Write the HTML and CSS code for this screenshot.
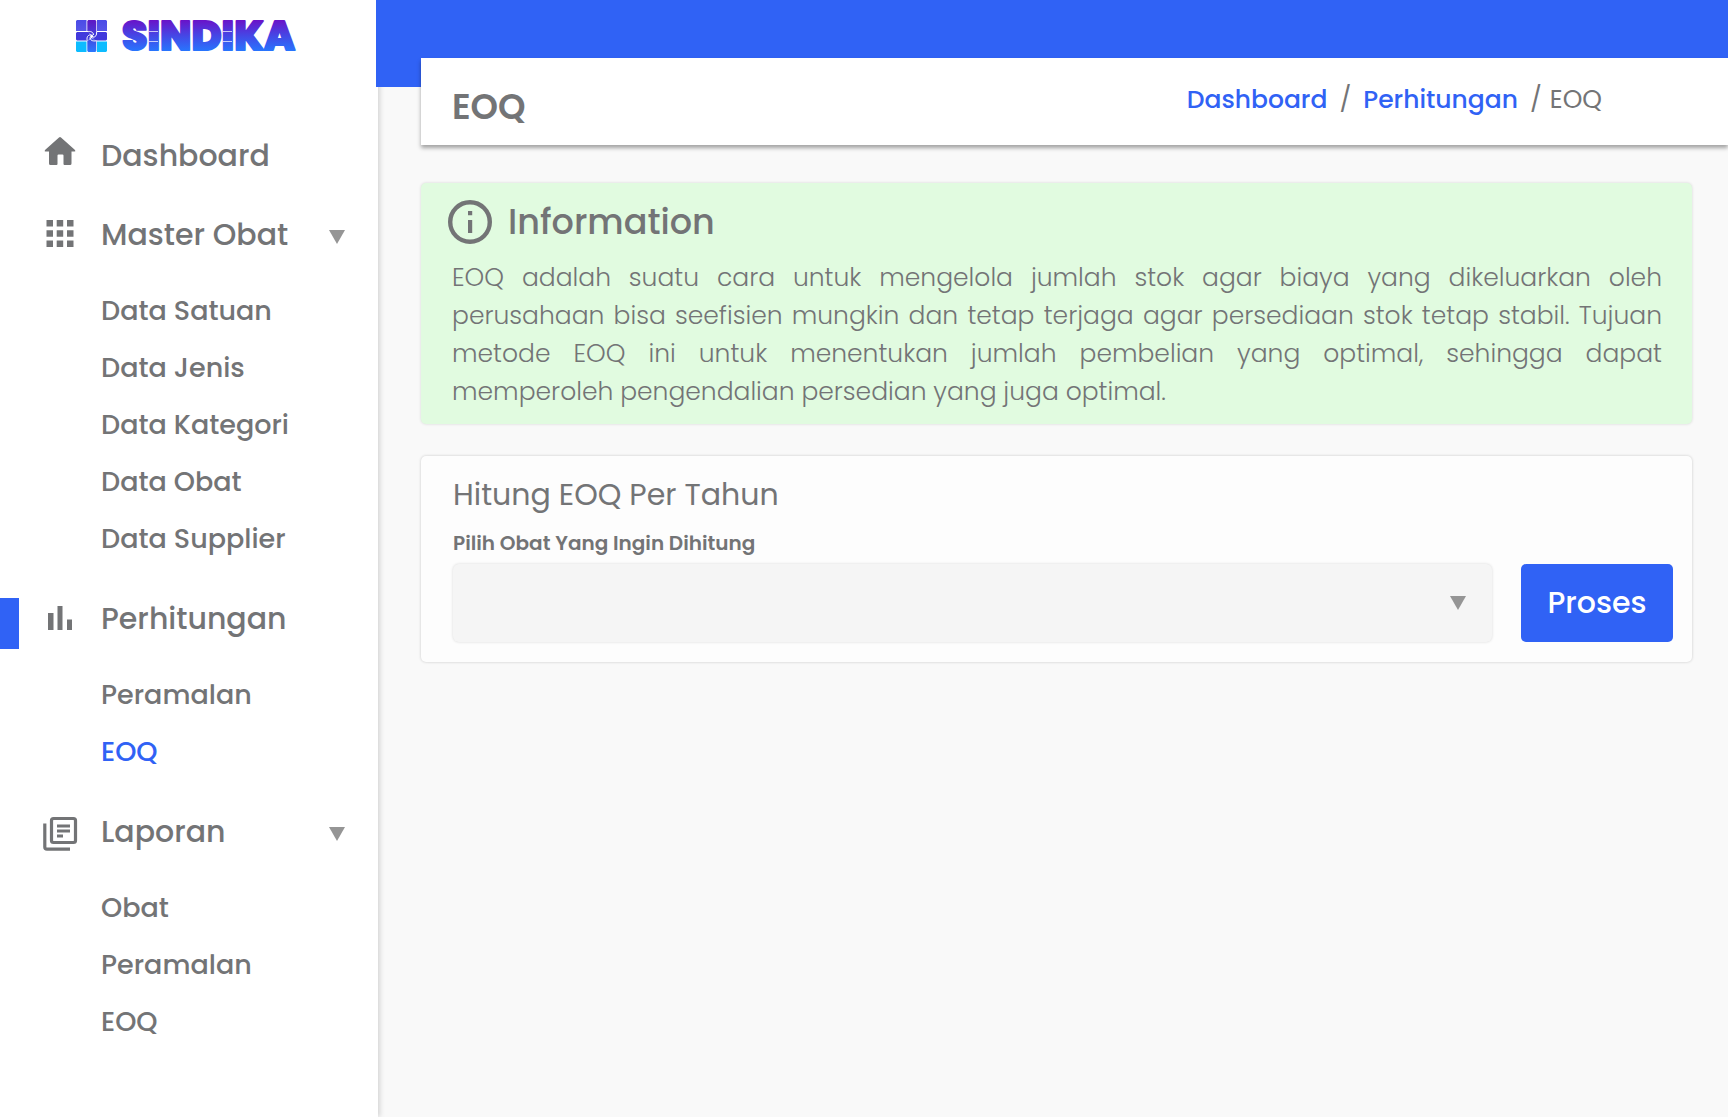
FILE: index.html
```html
<!DOCTYPE html>
<html lang="id">
<head>
<meta charset="utf-8">
<meta name="viewport" content="width=device-width, initial-scale=1">
<title>EOQ - Sindika</title>
<link rel="stylesheet" href="styles.css">
</head>
<body>
<div class="layout">
  <aside class="sidebar">
    <a class="brand" href="#" aria-label="Sindika">
      <svg class="brand-mark" viewBox="0 0 31 32" width="31" height="32" aria-hidden="true">
        <defs>
          <linearGradient id="tile" x1="0" y1="0" x2="0" y2="1"><stop offset="0" stop-color="#4a4be6"/><stop offset="1" stop-color="#5656e8"/></linearGradient>
          <linearGradient id="stem" x1="0" y1="0" x2="0" y2="32" gradientUnits="userSpaceOnUse"><stop offset="0" stop-color="#5f16c4"/><stop offset="0.5" stop-color="#4640dc"/><stop offset="1" stop-color="#2a78ff"/></linearGradient>
        </defs>
        <path fill="url(#tile)" d="M1 0h9.500v11H0V1zM21 0h9l1 1v10H21z"/>
        <path fill="#0dbcff" d="M0 21.500h10.500V32H1l-1-1zM21 21.500h10V31l-1 1h-9z"/>
        <path fill="url(#stem)" d="M11.300 1l1-1h7l1 1v11l-4.500 3-4.500-3zM11.300 21l4.500-3 4.500 3v10l-1 1h-7l-1-1z"/>
        <path fill="#4139dc" d="M0 13l1-1h11l4 4-4 4.500H1l-1-1zM19 12h11l1 1v6.500l-1 1H19l-4-4.500z"/>
        <path fill="none" stroke="#fff" stroke-width="1" d="M11 11.600c3.500-.6 6.500.4 6.500 3.400M20.600 12c.4 3-1 5.200-3.600 5.200M20.500 20.800c-4 .6-6.500-.4-6.500-3.600M11.200 20.500c-.8-3.500.8-5.700 3.600-5.700"/>
        <circle cx="15.700" cy="16.200" r="1.400" fill="#fff"/>
      </svg>
      <svg class="brand-name" viewBox="0 0 184 40" width="184" height="40" aria-hidden="true">
        <defs>
          <linearGradient id="word" x1="0" y1="4" x2="0" y2="36" gradientUnits="userSpaceOnUse"><stop offset="0" stop-color="#6a12c8"/><stop offset="0.5" stop-color="#4448e6"/><stop offset="1" stop-color="#2678ff"/></linearGradient>
        </defs>
        <text class="brand-text" x="3" y="34" fill="url(#word)" stroke="url(#word)">SINDIKA</text>
        <path fill="none" stroke="#fff" stroke-opacity="0.7" d="M30 15.500h9M30 25.500h9M104 15.500h9M104 25.500h9"/>
      </svg>
    </a>
    <nav class="menu" aria-label="Menu utama">
      <a class="menu-title" href="#">
        <svg class="menu-icon" viewBox="0 2 40 40" width="40" height="40" aria-hidden="true"><path fill="currentColor" d="M19 4.500q1-1 2 0l14 12.500q1 1.500-.5 1.500H31.500V30.500q0 1.500-1.500 1.500h-5.500q-1 0-1-1V22.500q0-1-1-1h-4q-1 0-1 1V31q0 1-1 1H10.500Q9 32 9 30.500V18.500H5.500Q4 18.500 5 17z"/></svg>
        <span class="menu-label">Dashboard</span>
      </a>
      <section class="menu-group">
        <button class="menu-title" type="button">
          <svg class="menu-icon" viewBox="0 0 40 40" width="40" height="40" aria-hidden="true"><path fill="currentColor" d="M6.500 6h6.500v6.500H6.500zM16.700 6h6.500v6.500h-6.500zM27 6h6.500v6.500H27zM6.500 16.200h6.500v6.500H6.500zM16.700 16.200h6.500v6.500h-6.500zM27 16.200h6.500v6.500H27zM6.500 26.400h6.500v6.500H6.500zM16.700 26.400h6.500v6.500h-6.500zM27 26.400h6.500v6.500H27z"/></svg>
          <span class="menu-label">Master Obat</span>
          <svg class="caret" viewBox="0 0 16 14" width="16" height="14" aria-hidden="true"><path fill="currentColor" d="M0 0h16L8 14z"/></svg>
        </button>
        <ul class="submenu">
          <li><a href="#">Data Satuan</a></li>
          <li><a href="#">Data Jenis</a></li>
          <li><a href="#">Data Kategori</a></li>
          <li><a href="#">Data Obat</a></li>
          <li><a href="#">Data Supplier</a></li>
        </ul>
      </section>
      <section class="menu-group">
        <button class="menu-title menu-title-active" type="button">
          <svg class="menu-icon" viewBox="0 0 40 40" width="40" height="40" aria-hidden="true"><path fill="currentColor" d="M8 15h5.500v17H8zM17.500 8H22.500v24h-5zM27 21.500h5V32h-5z"/></svg>
          <span class="menu-label">Perhitungan</span>
        </button>
        <ul class="submenu">
          <li><a href="#">Peramalan</a></li>
          <li><a class="current" href="#" aria-current="page">EOQ</a></li>
        </ul>
      </section>
      <section class="menu-group">
        <button class="menu-title" type="button">
          <svg class="menu-icon" viewBox="0 0 40 40" width="40" height="40" aria-hidden="true"><g fill="none" stroke="currentColor" stroke-width="3.200"><rect x="11.500" y="7.500" width="24" height="24" rx="2"/><path d="M4.800 12.500V36q0 2.200 2.200 2.200h23M17 15h13M17 20h13M17 25h6"/></g></svg>
          <span class="menu-label">Laporan</span>
          <svg class="caret" viewBox="0 0 16 14" width="16" height="14" aria-hidden="true"><path fill="currentColor" d="M0 0h16L8 14z"/></svg>
        </button>
        <ul class="submenu">
          <li><a href="#">Obat</a></li>
          <li><a href="#">Peramalan</a></li>
          <li><a href="#">EOQ</a></li>
        </ul>
      </section>
    </nav>
  </aside>

  <div class="main">
    <div class="topbar"></div>
    <header class="page-header">
      <h1 class="page-title">EOQ</h1>
      <nav class="breadcrumb" aria-label="Breadcrumb">
        <a href="#">Dashboard</a>
        <span class="slash">/</span>
        <a href="#">Perhitungan</a>
        <span class="slash slash-last">/</span>
        <span>EOQ</span>
      </nav>
    </header>
    <main class="content">
      <section class="info">
        <h2 class="info-title">
          <svg viewBox="0 0 44 44" width="44" height="44" aria-hidden="true"><circle cx="22" cy="22" r="19.800" fill="none" stroke="currentColor" stroke-width="4.400"/><path fill="currentColor" d="M20 11h4.200v4.200H20zM20 20h4.200v13H20z"/></svg>
          Information
        </h2>
        <p class="info-text">EOQ adalah suatu cara untuk mengelola jumlah stok agar biaya yang dikeluarkan oleh perusahaan bisa seefisien mungkin dan tetap terjaga agar persediaan stok tetap stabil. Tujuan metode EOQ ini untuk menentukan jumlah pembelian yang optimal, sehingga dapat memperoleh pengendalian persedian yang juga optimal.</p>
      </section>
      <form class="card">
        <h2 class="card-title">Hitung EOQ Per Tahun</h2>
        <label class="field-label" for="obat">Pilih Obat Yang Ingin Dihitung</label>
        <div class="field-row">
          <div class="select-box">
            <select id="obat" class="select"><option value=""></option></select>
            <svg class="caret select-caret" viewBox="0 0 16 14" width="16" height="14" aria-hidden="true"><path fill="currentColor" d="M0 0h16L8 14z"/></svg>
          </div>
          <button class="submit" type="button">Proses</button>
        </div>
      </form>
    </main>
  </div>
</div>
</body>
</html>
```

FILE: styles.css
```css
:root {
  --blue: #3062f5;
  --text: #737476;
  --caret: #959595;
}

* {
  box-sizing: border-box;
}

body {
  margin: 0;
  background: #f9f9f9;
  color: var(--text);
  font-family: Poppins, Inter, "Open Sans", sans-serif;
}

a {
  color: inherit;
  text-decoration: none;
}

button {
  border: 0;
  font: inherit;
  cursor: pointer;
}

.layout {
  display: flex;
  min-height: 100vh;
}

/* Sidebar */
.sidebar {
  flex: 0 0 378px;
  background: #fff;
  box-shadow: 2px 0 5px rgba(0, 0, 0, 0.15);
}

.brand {
  display: flex;
  align-items: center;
  gap: 12px;
  height: 72px;
  padding-left: 76px;
}

.brand-name {
  overflow: visible;
}

.brand-text {
  font-size: 41px;
  font-weight: 800;
  stroke-width: 2px;
  stroke-linejoin: round;
}

.menu {
  display: flex;
  flex-direction: column;
  gap: 22px;
  padding: 54px 0 40px;
}

.menu-title {
  position: relative;
  display: flex;
  align-items: center;
  width: 100%;
  height: 57px;
  padding: 0 33px 0 40px;
  background: none;
  font-size: 30px;
  font-weight: 500;
  text-align: left;
}

.menu-title-active::before {
  content: "";
  position: absolute;
  top: 9px;
  left: 0;
  width: 19px;
  height: 51px;
  background: var(--blue);
}

.menu-icon {
  flex: none;
  margin-right: 21px;
}

.menu-label {
  flex: 1;
  padding-top: 2px;
}

button.menu-title {
  color: var(--text);
}

.caret {
  flex: none;
  color: var(--caret);
}

.menu-title .caret {
  margin-top: 6px;
}

.submenu {
  margin: 20px 0 0;
  padding: 0 0 0 101px;
  list-style: none;
  font-size: 27px;
  font-weight: 500;
  line-height: 57px;
}

.submenu a {
  display: block;
}

.submenu .current {
  color: var(--blue);
}

/* Main column overlaps the sidebar edge slightly so the bar covers its shadow */
.main {
  position: relative;
  flex: 1;
  min-width: 0;
  margin-left: -2px;
}

.topbar {
  height: 87px;
  background: var(--blue);
}

.page-header {
  display: flex;
  align-items: flex-start;
  justify-content: space-between;
  margin: -29px 0 0 45px;
  padding: 24px 126px 13px 31px;
  background: #fff;
  box-shadow: 0 3px 4px rgba(0, 0, 0, 0.35);
}

.page-title {
  margin: 0;
  font-size: 35px;
  font-weight: 600;
  line-height: 50px;
}

.breadcrumb {
  display: flex;
  font-size: 25px;
  line-height: 36px;
}

.breadcrumb a {
  color: var(--blue);
  font-weight: 500;
}

.slash {
  margin: 0 12px;
}

.slash-last {
  margin-right: 8px;
}

.content {
  display: flex;
  flex-direction: column;
  gap: 32px;
  padding: 38px 36px 40px 45px;
}

.info {
  padding: 17px 30px 13px 27px;
  border-radius: 5px;
  background: #e1fbe0;
  box-shadow: 0 0 3px rgba(0, 0, 0, 0.15);
}

.info-title {
  display: flex;
  align-items: center;
  gap: 16px;
  margin: 0 0 15px;
  font-size: 35px;
  font-weight: 500;
  line-height: 44px;
}

.info-text {
  margin: 0;
  padding-left: 4px;
  font-size: 25px;
  font-weight: 300;
  line-height: 38px;
  text-align: justify;
}

.card {
  padding: 16px 19px 20px 32px;
  border-radius: 5px;
  background: #fdfdfd;
  box-shadow: 0 0 3px rgba(0, 0, 0, 0.2);
}

.card-title {
  margin: 0 0 10px;
  font-size: 30px;
  font-weight: 400;
  line-height: 46px;
}

.field-label {
  display: block;
  margin-bottom: 6px;
  font-size: 20px;
  font-weight: 600;
  line-height: 30px;
}

.field-row {
  display: flex;
  align-items: center;
  gap: 29px;
}

.select-box {
  position: relative;
  flex: 1;
}

.select {
  display: block;
  width: 100%;
  height: 78px;
  padding: 0 60px 0 20px;
  border: 0;
  border-radius: 6px;
  appearance: none;
  background: #f5f5f5;
  box-shadow: 0 0 3px rgba(0, 0, 0, 0.15);
  color: inherit;
  font: inherit;
}

.select-caret {
  position: absolute;
  top: 32px;
  right: 26px;
  pointer-events: none;
}

.submit {
  width: 152px;
  height: 78px;
  border-radius: 5px;
  background: var(--blue);
  color: #fff;
  font-size: 30px;
  font-weight: 500;
}
```
